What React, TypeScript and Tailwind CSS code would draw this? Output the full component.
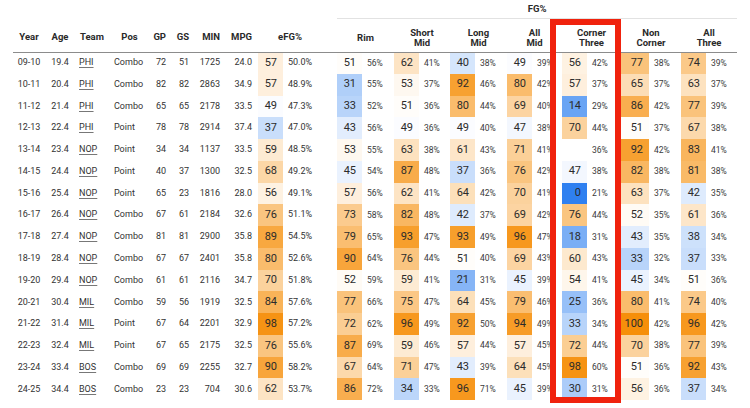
import React from "react";

type Cell = [number | null, string];
type Row = {
  year: string;
  age: string;
  team: string;
  pos: string;
  gp: string;
  gs: string;
  min: string;
  mpg: string;
  efg: Cell;
  shots: Cell[]; // rim, short mid, long mid, all mid, corner three, non corner, all three
};

const r = (
  year: string,
  age: string,
  team: string,
  pos: string,
  gp: string,
  gs: string,
  min: string,
  mpg: string,
  efg: Cell,
  ...shots: Cell[]
): Row => ({ year, age, team, pos, gp, gs, min, mpg, efg, shots });

const rows: Row[] = [
  r("09-10", "19.4", "PHI", "Combo", "72", "51", "1725", "24.0", [57, "50.0%"], [51, "56%"], [62, "41%"], [40, "38%"], [49, "39%"], [56, "42%"], [77, "38%"], [74, "39%"]),
  r("10-11", "20.4", "PHI", "Combo", "82", "82", "2863", "34.9", [57, "48.9%"], [31, "55%"], [53, "37%"], [92, "46%"], [80, "42%"], [57, "37%"], [65, "37%"], [63, "37%"]),
  r("11-12", "21.4", "PHI", "Combo", "65", "65", "2178", "33.5", [49, "47.3%"], [33, "52%"], [51, "36%"], [80, "44%"], [69, "40%"], [14, "29%"], [86, "42%"], [77, "39%"]),
  r("12-13", "22.4", "PHI", "Point", "78", "78", "2914", "37.4", [37, "47.0%"], [43, "56%"], [49, "36%"], [49, "40%"], [47, "38%"], [70, "44%"], [51, "37%"], [67, "38%"]),
  r("13-14", "23.4", "NOP", "Point", "34", "34", "1137", "33.5", [59, "48.5%"], [53, "55%"], [63, "38%"], [61, "43%"], [71, "41%"], [null, "36%"], [92, "42%"], [83, "41%"]),
  r("14-15", "24.4", "NOP", "Point", "40", "37", "1300", "32.5", [68, "49.2%"], [45, "54%"], [87, "48%"], [37, "36%"], [76, "42%"], [47, "38%"], [82, "38%"], [81, "38%"]),
  r("15-16", "25.4", "NOP", "Point", "65", "23", "1816", "28.0", [56, "49.1%"], [57, "56%"], [62, "41%"], [64, "42%"], [70, "41%"], [0, "21%"], [63, "37%"], [42, "35%"]),
  r("16-17", "26.4", "NOP", "Combo", "67", "61", "2184", "32.6", [76, "51.1%"], [73, "58%"], [82, "48%"], [42, "37%"], [69, "42%"], [76, "44%"], [52, "35%"], [61, "36%"]),
  r("17-18", "27.4", "NOP", "Combo", "81", "81", "2900", "35.8", [89, "54.5%"], [79, "65%"], [93, "47%"], [93, "49%"], [96, "47%"], [18, "31%"], [43, "35%"], [38, "34%"]),
  r("18-19", "28.4", "NOP", "Combo", "67", "67", "2401", "35.8", [80, "52.6%"], [90, "64%"], [76, "44%"], [51, "40%"], [69, "43%"], [60, "43%"], [33, "32%"], [37, "33%"]),
  r("19-20", "29.4", "NOP", "Combo", "61", "61", "2116", "34.7", [70, "51.8%"], [52, "59%"], [59, "41%"], [21, "31%"], [45, "39%"], [54, "41%"], [45, "34%"], [51, "36%"]),
  r("20-21", "30.4", "MIL", "Combo", "59", "56", "1919", "32.5", [84, "57.6%"], [77, "66%"], [75, "47%"], [64, "45%"], [79, "46%"], [25, "36%"], [80, "41%"], [74, "40%"]),
  r("21-22", "31.4", "MIL", "Point", "67", "64", "2201", "32.9", [98, "57.2%"], [72, "62%"], [96, "49%"], [92, "50%"], [94, "49%"], [33, "34%"], [100, "42%"], [96, "42%"]),
  r("22-23", "32.4", "MIL", "Point", "67", "65", "2175", "32.5", [76, "55.6%"], [87, "69%"], [59, "46%"], [57, "44%"], [57, "45%"], [72, "44%"], [70, "38%"], [77, "39%"]),
  r("23-24", "33.4", "BOS", "Combo", "69", "69", "2255", "32.7", [90, "58.2%"], [67, "64%"], [71, "47%"], [43, "39%"], [64, "45%"], [98, "60%"], [51, "36%"], [92, "43%"]),
  r("24-25", "34.4", "BOS", "Combo", "23", "23", "704", "30.6", [62, "53.7%"], [86, "72%"], [34, "33%"], [96, "71%"], [45, "39%"], [30, "31%"], [56, "36%"], [37, "34%"]),
];

const shotHeads: [string, string?][] = [
  ["Rim"],
  ["Short", "Mid"],
  ["Long", "Mid"],
  ["All", "Mid"],
  ["Corner", "Three"],
  ["Non", "Corner"],
  ["All", "Three"],
];

// percentile -> blue (low) / white (50) / orange (high)
function heat(v: number | null) {
  if (v === null) return "transparent";
  const mix = (to: number[], t: number) =>
    `rgb(${to.map((c) => Math.round(255 + (c - 255) * t)).join(",")})`;
  if (v >= 50) return mix([246, 143, 10], (v - 50) / 50);
  return mix([47, 128, 240], (50 - v) / 50);
}

function Rank({ cell }: { cell: Cell }) {
  return (
    <td
      className="pr-[6px] text-right text-[11px] text-[#2b2b2b]"
      style={{ backgroundColor: heat(cell[0]) }}
    >
      {cell[0] ?? ""}
    </td>
  );
}

export default function App() {
  return (
    <div className="relative h-[408px] w-[750px] overflow-hidden bg-white pl-[13px] font-['Roboto','Liberation_Sans',sans-serif] text-[#333]">
      <table className="w-[724px] table-fixed border-collapse text-[9px]">
        <colgroup>
          <col className="w-[32px]" />
          <col className="w-[30px]" />
          <col className="w-[34px]" />
          <col className="w-[41px]" />
          <col className="w-[20px]" />
          <col className="w-[23px]" />
          <col className="w-[31px]" />
          <col className="w-[34px]" />
          <col className="w-[25px]" />
          <col className="w-[39px]" />
          <col className="w-[15px]" />
          <col className="w-[25px]" />
          <col className="w-[32px]" />
          <col className="w-[25px]" />
          <col className="w-[31px]" />
          <col className="w-[25px]" />
          <col className="w-[32px]" />
          <col className="w-[25px]" />
          <col className="w-[30px]" />
          <col className="w-[25px]" />
          <col className="w-[34px]" />
          <col className="w-[28px]" />
          <col className="w-[32px]" />
          <col className="w-[25px]" />
          <col className="w-[31px]" />
        </colgroup>
        <thead className="text-[9.5px] font-bold leading-[10px] text-[#2a2a2a]">
          <tr className="h-[18px]">
            <th colSpan={11} />
            <th colSpan={14} className="border-b border-[#e2e2e2] pt-[1px] text-center align-middle">
              FG%
            </th>
          </tr>
          <tr className="h-[34px] border-b border-[#8c8c8c] [&>th]:pt-[5px]">
            <th className="text-center">Year</th>
            <th className="text-center">Age</th>
            <th className="pl-[5px] text-left">Team</th>
            <th className="text-center">Pos</th>
            <th className="pr-[4px] text-right">GP</th>
            <th className="pr-[4px] text-right">GS</th>
            <th className="pr-[4px] text-right">MIN</th>
            <th className="pr-[6px] text-right">MPG</th>
            <th colSpan={2} className="text-center">
              eFG%
            </th>
            <th />
            {shotHeads.map(([a, b], i) => (
              <th key={i} colSpan={2} className="text-center">
                {a}
                {b && <br />}
                {b}
              </th>
            ))}
          </tr>
        </thead>
        <tbody>
          {rows.map((row) => (
            <tr key={row.year} className="h-[21.77px]">
              <td className="text-center">{row.year}</td>
              <td className="text-center">{row.age}</td>
              <td className="pl-[4px]">
                <span className="underline decoration-[#777] underline-offset-2">{row.team}</span>
              </td>
              <td className="pl-[5px]">{row.pos}</td>
              <td className="pr-[4px] text-right">{row.gp}</td>
              <td className="pr-[4px] text-right">{row.gs}</td>
              <td className="pr-[4px] text-right">{row.min}</td>
              <td className="pr-[6px] text-right">{row.mpg}</td>
              <Rank cell={row.efg} />
              <td className="pl-[5px]">{row.efg[1]}</td>
              <td />
              {row.shots.map((cell, i) => (
                <React.Fragment key={i}>
                  <Rank cell={cell} />
                  <td className="pl-[5px] text-[8.5px] text-[#3a3a3a]">{cell[1]}</td>
                </React.Fragment>
              ))}
            </tr>
          ))}
        </tbody>
      </table>

      {/* highlight box over the Corner Three column */}
      <div className="pointer-events-none absolute left-[550px] top-[19px] h-[384px] w-[71px] border-[6.5px] border-[#f0220d]" />
    </div>
  );
}
